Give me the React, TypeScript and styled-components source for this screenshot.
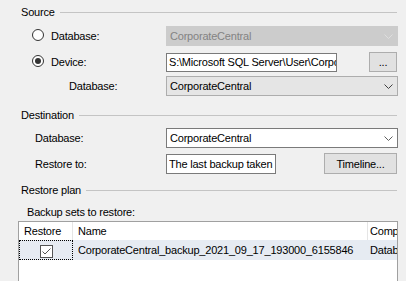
import React from 'react';
import styled, { createGlobalStyle } from 'styled-components';

const GlobalStyle = createGlobalStyle`
  html, body {
    margin: 0;
    padding: 0;
    background: #f0f0f0;
  }

  body {
    font-family: "Liberation Sans", Arial, sans-serif;
    font-size: 11px;
    letter-spacing: -0.2px;
    color: #000;
  }
`;

const Page = styled.div`
  width: 406px;
  height: 281px;
  overflow: hidden;
  box-sizing: border-box;
  padding-top: 6px;
  display: flex;
  flex-direction: column;
  background: #f0f0f0;
`;

const GroupHeader = styled.div<{ $mt?: number }>`
  display: flex;
  align-items: center;
  gap: 5px;
  height: 14px;
  margin: ${(p) => p.$mt ?? 0}px 9px 0 21px;
  white-space: nowrap;

  &::after {
    content: '';
    flex: 1;
    height: 1px;
    background: #c4c4c4;
  }
`;

const Row = styled.div<{ $mt: number; $h?: number }>`
  display: flex;
  align-items: center;
  height: ${(p) => p.$h ?? 20}px;
  margin-top: ${(p) => p.$mt}px;
  padding-right: 8px;
`;

const Label = styled.div<{ $indent: number }>`
  flex: 0 0 166px;
  box-sizing: border-box;
  padding-left: ${(p) => p.$indent}px;
  display: flex;
  align-items: center;
  gap: 7px;
  white-space: nowrap;
`;

const Radio = styled.span<{ $checked?: boolean }>`
  width: 12px;
  height: 12px;
  box-sizing: border-box;
  border: 1px solid #333;
  border-radius: 50%;
  background: #fff;
  display: flex;
  align-items: center;
  justify-content: center;
  margin-top: -2px;

  &::after {
    content: '';
    display: ${(p) => (p.$checked ? 'block' : 'none')};
    width: 6px;
    height: 6px;
    border-radius: 50%;
    background: #333;
  }
`;

const Combo = styled.div<{ $variant: 'disabled' | 'list' | 'edit' }>`
  flex: 1;
  height: 20px;
  box-sizing: border-box;
  display: flex;
  align-items: center;
  justify-content: space-between;
  padding: 0 4px 0 3px;
  white-space: nowrap;
  border: 1px solid
    ${(p) => (p.$variant === 'disabled' ? '#cccccc' : p.$variant === 'list' ? '#adadad' : '#7a7a7a')};
  background: ${(p) => (p.$variant === 'disabled' ? '#cccccc' : p.$variant === 'list' ? '#e5e5e5' : '#ffffff')};
  color: ${(p) => (p.$variant === 'disabled' ? '#838383' : '#000')};
`;

const TextBox = styled.input<{ $w: number; $h?: number }>`
  flex: 0 0 ${(p) => p.$w}px;
  width: ${(p) => p.$w}px;
  height: ${(p) => p.$h ?? 20}px;
  box-sizing: border-box;
  margin: 0;
  border: 1px solid #7a7a7a;
  border-radius: 0;
  background: #fff;
  padding: 0 0 0 2px;
  font: inherit;
  letter-spacing: inherit;
  color: #000;
  outline: none;
`;

const Button = styled.div<{ $w: number; $h?: number }>`
  flex: 0 0 ${(p) => p.$w}px;
  height: ${(p) => p.$h ?? 20}px;
  box-sizing: border-box;
  margin-left: auto;
  margin-right: 1px;
  border: 1px solid #adadad;
  background: #e1e1e1;
  display: flex;
  align-items: center;
  justify-content: center;
  white-space: nowrap;
`;

const Caption = styled.div`
  margin: 10px 0 0 27px;
  height: 14px;
  display: flex;
  align-items: center;
`;

const Grid = styled.div`
  margin: 3px 8px 0 18px;
  height: 90px;
  flex: 0 0 auto;
  border: 1px solid #a0a0a0;
  background: #fff;
`;

const GridRow = styled.div<{ $selected?: boolean }>`
  display: grid;
  grid-template-columns: 54px 295px 1fr;
  height: ${(p) => (p.$selected ? 20 : 18)}px;
  background: ${(p) => (p.$selected ? '#e6ebf2' : '#fff')};
`;

const Cell = styled.div<{ $pad: number; $sep?: boolean; $focus?: boolean }>`
  box-sizing: border-box;
  padding-left: ${(p) => p.$pad}px;
  display: flex;
  align-items: center;
  overflow: hidden;
  white-space: nowrap;
  border-right: ${(p) => (p.$sep ? '1px solid #e5e5e5' : 'none')};
  ${(p) => (p.$focus ? 'border: 1px dotted #000; justify-content: center; padding-left: 0;' : '')}
`;

const Check = styled.span`
  width: 13px;
  height: 13px;
  box-sizing: border-box;
  border: 1px solid #555;
  background: #fff;
  display: flex;
  align-items: center;
  justify-content: center;
  margin-top: 3px;
`;

function Chevron({ color }: { color: string }) {
  return (
    <svg width="9" height="5" viewBox="0 0 9 5">
      <polyline points="0.5,0.5 4.5,4.5 8.5,0.5" fill="none" stroke={color} strokeWidth="1" />
    </svg>
  );
}

export default function App() {
  return (
    <Page>
      <GlobalStyle />

      <GroupHeader>Source</GroupHeader>

      <Row $mt={8}>
        <Label $indent={32}>
          <Radio />
          Database:
        </Label>
        <Combo $variant="disabled">
          CorporateCentral
          <Chevron color="#dedede" />
        </Combo>
      </Row>

      <Row $mt={6}>
        <Label $indent={32}>
          <Radio $checked />
          Device:
        </Label>
        <TextBox $w={171} $h={19} readOnly value={'S:\\Microsoft SQL Server\\User\\CorporateCentral.bak'} />
        <Button $w={28}>...</Button>
      </Row>

      <Row $mt={4}>
        <Label $indent={69}>Database:</Label>
        <Combo $variant="list">
          CorporateCentral
          <Chevron color="#404040" />
        </Combo>
      </Row>

      <GroupHeader $mt={13}>Destination</GroupHeader>

      <Row $mt={7}>
        <Label $indent={35}>Database:</Label>
        <Combo $variant="edit">
          CorporateCentral
          <Chevron color="#606060" />
        </Combo>
      </Row>

      <Row $mt={5} $h={21}>
        <Label $indent={35}>Restore to:</Label>
        <TextBox $w={110} readOnly value="The last backup taken" />
        <Button $w={73} $h={21}>Timeline...</Button>
      </Row>

      <GroupHeader $mt={10}>Restore plan</GroupHeader>

      <Caption>Backup sets to restore:</Caption>

      <Grid>
        <GridRow>
          <Cell $pad={5} $sep>Restore</Cell>
          <Cell $pad={5} $sep>Name</Cell>
          <Cell $pad={2}>Comp</Cell>
        </GridRow>
        <GridRow $selected>
          <Cell $pad={0} $focus>
            <Check>
              <svg width="9" height="7" viewBox="0 0 9 7">
                <polyline points="0.5,3.5 3,6 8.5,0.5" fill="none" stroke="#555" strokeWidth="1" />
              </svg>
            </Check>
          </Cell>
          <Cell $pad={5}>CorporateCentral_backup_2021_09_17_193000_6155846</Cell>
          <Cell $pad={2}>Database</Cell>
        </GridRow>
      </Grid>
    </Page>
  );
}
